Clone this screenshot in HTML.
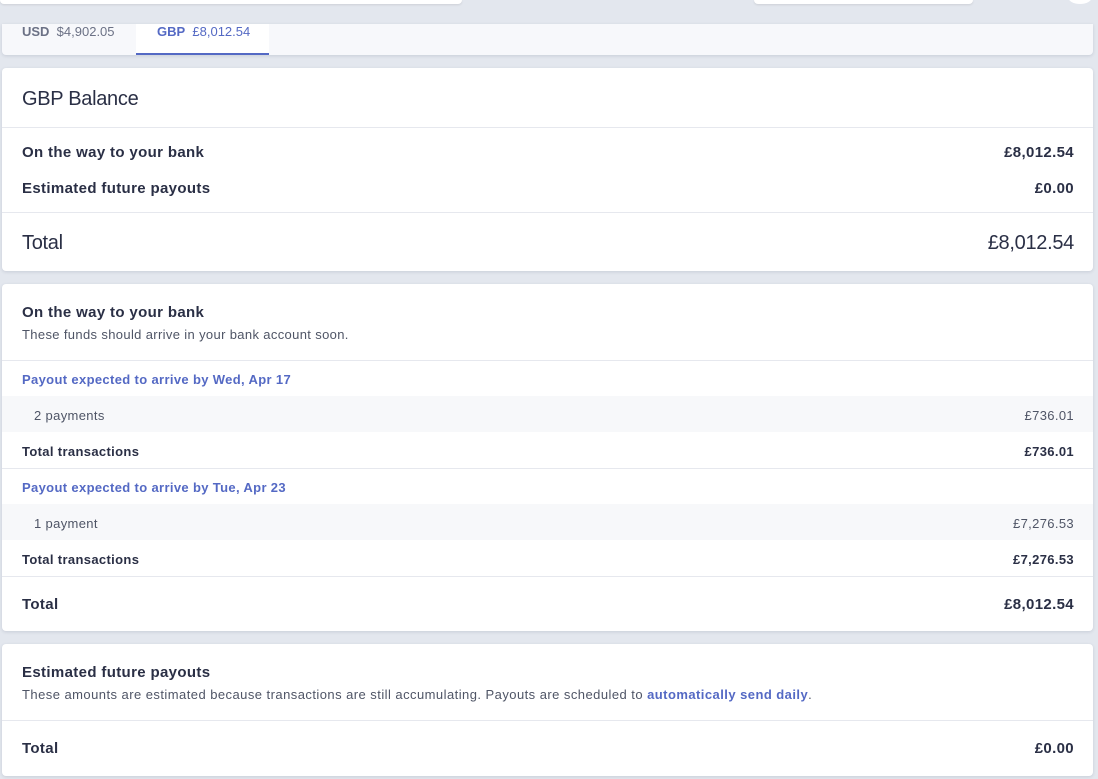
<!DOCTYPE html>
<html><head><meta charset="utf-8"><style>
*{box-sizing:border-box;margin:0;padding:0}
body{width:1098px;height:779px;overflow:hidden;background:#e3e7ee;font-family:"Liberation Sans",sans-serif;color:#2a2f45;position:relative;letter-spacing:0.35px}
.abs{position:absolute}
.card{position:absolute;left:2px;width:1091px;background:#fff;border-radius:4px;box-shadow:0 1px 3px rgba(50,60,90,.15)}
.row{position:absolute;left:20px;right:19px;display:flex;justify-content:space-between;align-items:center}
.line{position:absolute;left:0;right:0;height:1px;background:#e6e8ee}
.b{font-weight:bold}
.blue{color:#5469c4}
.big{font-size:20px;letter-spacing:-0.3px}
</style></head><body>
<div class="abs" style="left:0;top:0;width:462px;height:4px;background:#fff;border-radius:0 0 4px 4px;box-shadow:0 1px 2px rgba(0,0,0,.1)"></div>
<div class="abs" style="left:754px;top:0;width:219px;height:4px;background:#fff;border-radius:0 0 4px 4px;box-shadow:0 1px 2px rgba(0,0,0,.1)"></div>
<div class="abs" style="left:1068px;top:-10px;width:24px;height:14px;background:#fff;border-radius:50%"></div>

<div class="abs" style="left:2px;top:24px;width:1091px;height:31px;background:#f7f8fb;border-radius:0 0 4px 4px;box-shadow:0 1px 3px rgba(50,60,90,.15)">
 <div class="abs" style="left:20px;top:0;font-size:13px;color:#6b7185;line-height:16px;letter-spacing:0"><span class="b">USD</span>&nbsp; $4,902.05</div>
 <div class="abs" style="left:134px;top:0;width:133px;height:31px;background:#fff;border-bottom:2px solid #5469c4;font-size:13px;color:#5469c4;line-height:16px;padding-left:21px;letter-spacing:0"><span class="b">GBP</span>&nbsp; £8,012.54</div>
</div>

<div class="card" style="top:68px;height:203px">
 <div class="abs big" style="left:20px;top:20px">GBP Balance</div>
 <div class="line" style="top:59px"></div>
 <div class="row b" style="top:76px;font-size:15px"><span>On the way to your bank</span><span>£8,012.54</span></div>
 <div class="row b" style="top:112px;font-size:15px"><span>Estimated future payouts</span><span>£0.00</span></div>
 <div class="line" style="top:144px"></div>
 <div class="row big" style="top:164px"><span>Total</span><span>£8,012.54</span></div>
</div>

<div class="card" style="top:284px;height:347px">
 <div class="abs b" style="left:20px;top:20px;font-size:15px">On the way to your bank</div>
 <div class="abs" style="left:20px;top:43px;font-size:13px;color:#4f5566">These funds should arrive in your bank account soon.</div>
 <div class="line" style="top:76px"></div>
 <div class="row b blue" style="top:88px;font-size:13px"><span>Payout expected to arrive by Wed, Apr 17</span></div>
 <div class="abs" style="left:0;right:0;top:112px;height:36px;background:#f7f8fa"></div>
 <div class="row" style="top:124px;font-size:13px;color:#4f5566"><span style="padding-left:12px">2 payments</span><span>£736.01</span></div>
 <div class="row b" style="top:160px;font-size:13px"><span>Total transactions</span><span>£736.01</span></div>
 <div class="line" style="top:184px"></div>
 <div class="row b blue" style="top:196px;font-size:13px"><span>Payout expected to arrive by Tue, Apr 23</span></div>
 <div class="abs" style="left:0;right:0;top:220px;height:36px;background:#f7f8fa"></div>
 <div class="row" style="top:232px;font-size:13px;color:#4f5566"><span style="padding-left:12px">1 payment</span><span>£7,276.53</span></div>
 <div class="row b" style="top:268px;font-size:13px"><span>Total transactions</span><span>£7,276.53</span></div>
 <div class="line" style="top:292px"></div>
 <div class="row b" style="top:312px;font-size:15px"><span>Total</span><span>£8,012.54</span></div>
</div>

<div class="card" style="top:644px;height:132px">
 <div class="abs b" style="left:20px;top:20px;font-size:15px">Estimated future payouts</div>
 <div class="abs" style="left:20px;top:43px;font-size:13px;color:#4f5566;letter-spacing:0.45px">These amounts are estimated because transactions are still accumulating. Payouts are scheduled to <span class="b blue">automatically send daily</span>.</div>
 <div class="line" style="top:76px"></div>
 <div class="row b" style="top:96px;font-size:15px"><span>Total</span><span>£0.00</span></div>
</div>
</body></html>
